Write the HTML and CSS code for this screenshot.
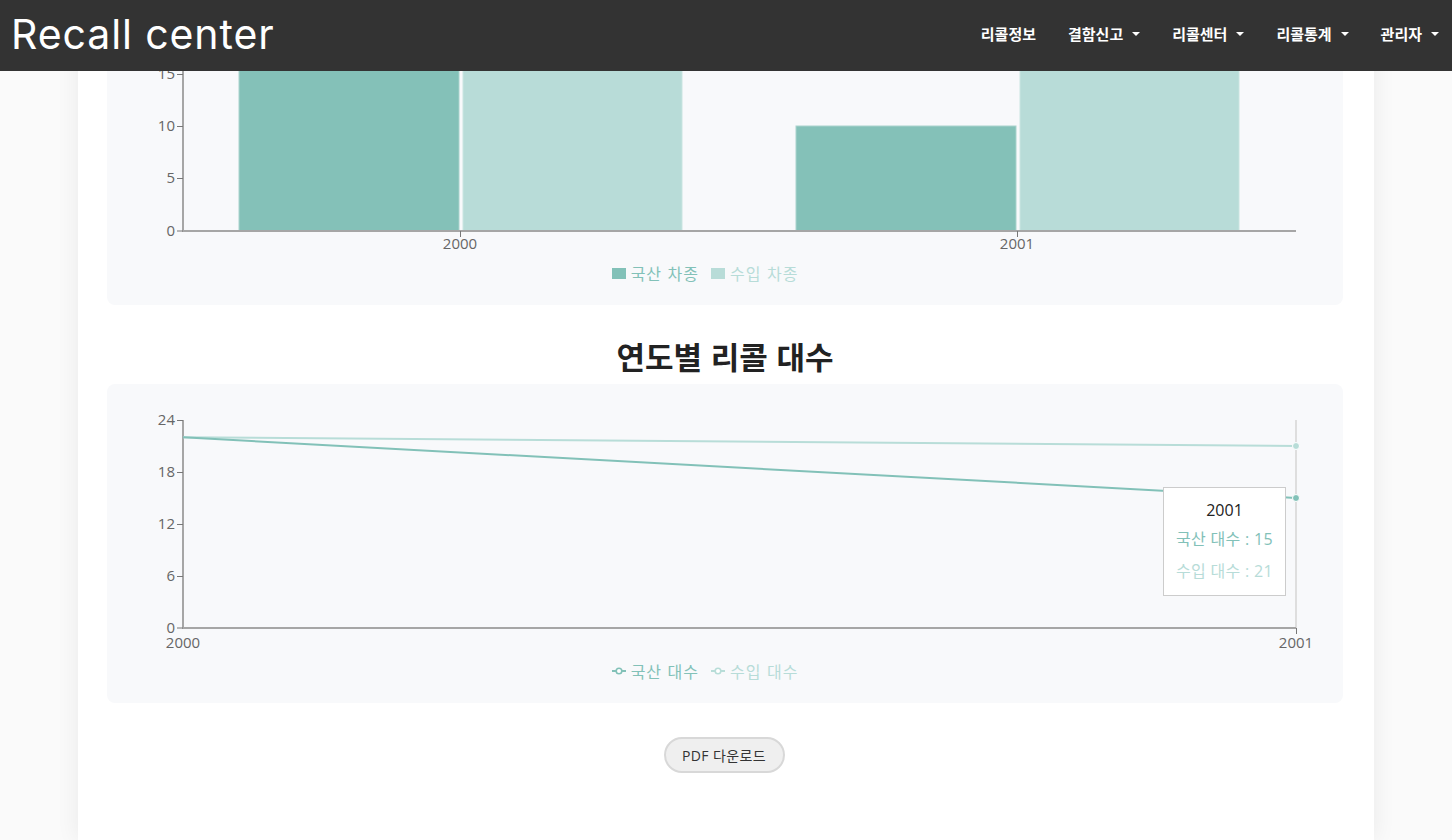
FILE: index.html
```html
<!DOCTYPE html>
<html lang="ko">
<head>
<meta charset="utf-8">
<title>Recall center</title>
<link rel="stylesheet" href="styles.css">
</head>
<body>
<header class="navbar">
  <div class="brand">Recall center</div>
  <nav class="menu">
    <span class="menu-item">리콜정보</span>
    <span class="menu-item">결함신고 <i class="caret"></i></span>
    <span class="menu-item">리콜센터 <i class="caret"></i></span>
    <span class="menu-item">리콜통계 <i class="caret"></i></span>
    <span class="menu-item">관리자 <i class="caret"></i></span>
  </nav>
</header>

<main class="container">
  <section class="card card-bar">
    <svg class="chart" width="1236" height="263" viewBox="0 0 1236 263">
      <g class="bars">
        <rect x="132" y="-20" width="220" height="251" fill="#84c1b8" stroke="#a9d3cd" stroke-width="1"/>
        <rect x="356" y="-20" width="219" height="251" fill="#b8dcd8" stroke="#c9e5e1" stroke-width="1"/>
        <rect x="689" y="126" width="220" height="105" fill="#84c1b8" stroke="#a9d3cd" stroke-width="1"/>
        <rect x="913" y="-20" width="219" height="251" fill="#b8dcd8" stroke="#c9e5e1" stroke-width="1"/>
      </g>
      <g class="axis">
        <line x1="76" y1="0" x2="76" y2="232" stroke="#a6a6a6" stroke-width="2"/>
        <line x1="75" y1="231" x2="1189" y2="231" stroke="#a6a6a6" stroke-width="2"/>
        <line x1="70" y1="231" x2="76" y2="231" stroke="#777" stroke-width="1"/>
        <line x1="70" y1="178.5" x2="76" y2="178.5" stroke="#777" stroke-width="1"/>
        <line x1="70" y1="126.5" x2="76" y2="126.5" stroke="#777" stroke-width="1"/>
        <line x1="70" y1="74.5" x2="76" y2="74.5" stroke="#777" stroke-width="1"/>
        <line x1="353.5" y1="231" x2="353.5" y2="237" stroke="#777" stroke-width="1"/>
        <line x1="910.5" y1="231" x2="910.5" y2="237" stroke="#777" stroke-width="1"/>
      </g>
      <g class="ticks">
        <text x="68" y="236" text-anchor="end">0</text>
        <text x="68" y="183" text-anchor="end">5</text>
        <text x="68" y="131" text-anchor="end">10</text>
        <text x="68" y="79" text-anchor="end">15</text>
        <text x="353" y="249" text-anchor="middle">2000</text>
        <text x="910" y="249" text-anchor="middle">2001</text>
      </g>
    </svg>
    <div class="legend">
      <span class="legend-item dom"><i class="sw sw-dom"></i>국산 차종</span>
      <span class="legend-item imp"><i class="sw sw-imp"></i>수입 차종</span>
    </div>
  </section>

  <h2 class="chart-title">연도별 리콜 대수</h2>

  <section class="card card-line">
    <svg class="chart" width="1236" height="277" viewBox="0 0 1236 277">
      <g class="axis">
        <line x1="1189" y1="36" x2="1189" y2="244" stroke="#dedede" stroke-width="2"/>
        <line x1="76" y1="36" x2="76" y2="245" stroke="#a6a6a6" stroke-width="2"/>
        <line x1="75" y1="244" x2="1189" y2="244" stroke="#a6a6a6" stroke-width="2"/>
        <line x1="70" y1="244" x2="76" y2="244" stroke="#777" stroke-width="1"/>
        <line x1="70" y1="192.5" x2="76" y2="192.5" stroke="#777" stroke-width="1"/>
        <line x1="70" y1="140.5" x2="76" y2="140.5" stroke="#777" stroke-width="1"/>
        <line x1="70" y1="88.5" x2="76" y2="88.5" stroke="#777" stroke-width="1"/>
        <line x1="70" y1="36.5" x2="76" y2="36.5" stroke="#777" stroke-width="1"/>
        <line x1="1189.5" y1="244" x2="1189.5" y2="250" stroke="#777" stroke-width="1"/>
      </g>
      <g class="ticks">
        <text x="68" y="249" text-anchor="end">0</text>
        <text x="68" y="197" text-anchor="end">6</text>
        <text x="68" y="145" text-anchor="end">12</text>
        <text x="68" y="93" text-anchor="end">18</text>
        <text x="68" y="41" text-anchor="end">24</text>
        <text x="76" y="264" text-anchor="middle">2000</text>
        <text x="1189" y="264" text-anchor="middle">2001</text>
      </g>
      <g class="lines">
        <line x1="76" y1="53.3" x2="1189" y2="62" stroke="#b8ddd8" stroke-width="2"/>
        <line x1="76" y1="53.3" x2="1189" y2="114" stroke="#82c1b8" stroke-width="2"/>
        <circle cx="1189" cy="62" r="3.5" fill="#b8ddd8" stroke="#fff" stroke-width="1"/>
        <circle cx="1189" cy="114" r="3.5" fill="#82c1b8" stroke="#fff" stroke-width="1"/>
      </g>
    </svg>
    <div class="tooltip">
      <div class="tt-title">2001</div>
      <div class="tt-row tt-dom">국산 대수 : 15</div>
      <div class="tt-row tt-imp">수입 대수 : 21</div>
    </div>
    <div class="legend">
      <span class="legend-item dom">
        <svg class="ln" width="14" height="10" viewBox="0 0 14 10"><line x1="0" y1="5" x2="14" y2="5" stroke="#82c1b8" stroke-width="2"/><circle cx="7" cy="5" r="2.8" fill="#fff" stroke="#82c1b8" stroke-width="1.6"/></svg>국산 대수</span>
      <span class="legend-item imp">
        <svg class="ln" width="14" height="10" viewBox="0 0 14 10"><line x1="0" y1="5" x2="14" y2="5" stroke="#b8ddd8" stroke-width="2"/><circle cx="7" cy="5" r="2.8" fill="#fff" stroke="#b8ddd8" stroke-width="1.6"/></svg>수입 대수</span>
    </div>
  </section>

  <div class="actions">
    <button class="pdf-btn">PDF 다운로드</button>
  </div>
</main>
</body>
</html>
```

FILE: styles.css
```css
* { box-sizing: border-box; }

html, body {
  margin: 0;
  padding: 0;
}

body {
  background: #fafafa;
  font-family: "Open Sans", "Noto Sans CJK KR", sans-serif;
  color: #333;
  overflow: hidden;
  height: 840px;
}

.navbar {
  position: fixed;
  top: 0;
  left: 0;
  right: 0;
  height: 71px;
  background: #333333;
  display: flex;
  align-items: center;
  justify-content: space-between;
  padding: 0 13px 0 11px;
  z-index: 10;
}

.brand {
  font-family: "Inter", "Lato", sans-serif;
  font-weight: 400;
  font-size: 41px;
  color: #fff;
  letter-spacing: 0.9px;
  line-height: 1;
  margin-top: -2px;
}

.menu {
  display: flex;
  gap: 32px;
  align-items: center;
  margin-top: -4px;
}

.menu-item {
  font-family: "Noto Sans CJK KR", sans-serif;
  font-weight: 700;
  font-size: 15px;
  color: #fff;
  display: flex;
  align-items: center;
  gap: 9px;
}

.caret {
  display: inline-block;
  width: 0;
  height: 0;
  border-left: 4px solid transparent;
  border-right: 4px solid transparent;
  border-top: 4px solid #fff;
}

.container {
  width: 1296px;
  margin: 0 auto;
  background: #fff;
  min-height: 840px;
  box-shadow: 0 0 22px rgba(0, 0, 0, 0.07);
  padding: 0 31px 0 29px;
}

.card {
  background: #f8f9fb;
  border-radius: 8px;
  padding-bottom: 22px;
  position: relative;
}

.chart {
  display: block;
}

.ticks text {
  font-family: "Open Sans", sans-serif;
  font-size: 15px;
  fill: #666;
}

.legend {
  display: flex;
  justify-content: center;
  gap: 12px;
  height: 20px;
  align-items: center;
  padding-right: 40px;
}

.legend-item {
  font-family: "Noto Sans CJK KR", sans-serif;
  font-size: 16px;
  letter-spacing: 1px;
  display: flex;
  align-items: center;
  gap: 5px;
  line-height: 20px;
}

.legend-item.dom { color: #82c1b8; }
.legend-item.imp { color: #b7dcd8; }

.sw {
  display: inline-block;
  width: 14px;
  height: 11px;
}

.sw-dom { background: #82c1b8; }
.sw-imp { background: #b8dcd8; }

.ln { display: block; }

.chart-title {
  font-family: "Noto Sans CJK KR", sans-serif;
  font-weight: 700;
  font-size: 31px;
  line-height: 40px;
  color: #222;
  text-align: center;
  margin: 31px 0 8px;
}

.tooltip {
  position: absolute;
  left: 1056px;
  top: 103px;
  width: 123px;
  height: 109px;
  background: #fff;
  border: 1px solid #cccccc;
  text-align: center;
  padding-top: 9px;
  font-family: "Open Sans", "Noto Sans CJK KR", sans-serif;
  font-size: 16px;
}

.tt-title {
  line-height: 26px;
  color: #222;
}

.tt-row {
  line-height: 32px;
  white-space: nowrap;
  letter-spacing: 0.3px;
}

.tt-dom { color: #82c1b8; }
.tt-imp { color: #b7dcd8; }

.actions {
  display: flex;
  justify-content: center;
  padding-top: 34px;
  padding-right: 2px;
}

.pdf-btn {
  width: 121px;
  height: 36px;
  border-radius: 18px;
  background: #efefef;
  border: 2px solid #d8d8d8;
  font-family: "Open Sans", "Noto Sans CJK KR", sans-serif;
  font-size: 14px;
  letter-spacing: 0.4px;
  color: #333;
  padding: 0;
}
```
